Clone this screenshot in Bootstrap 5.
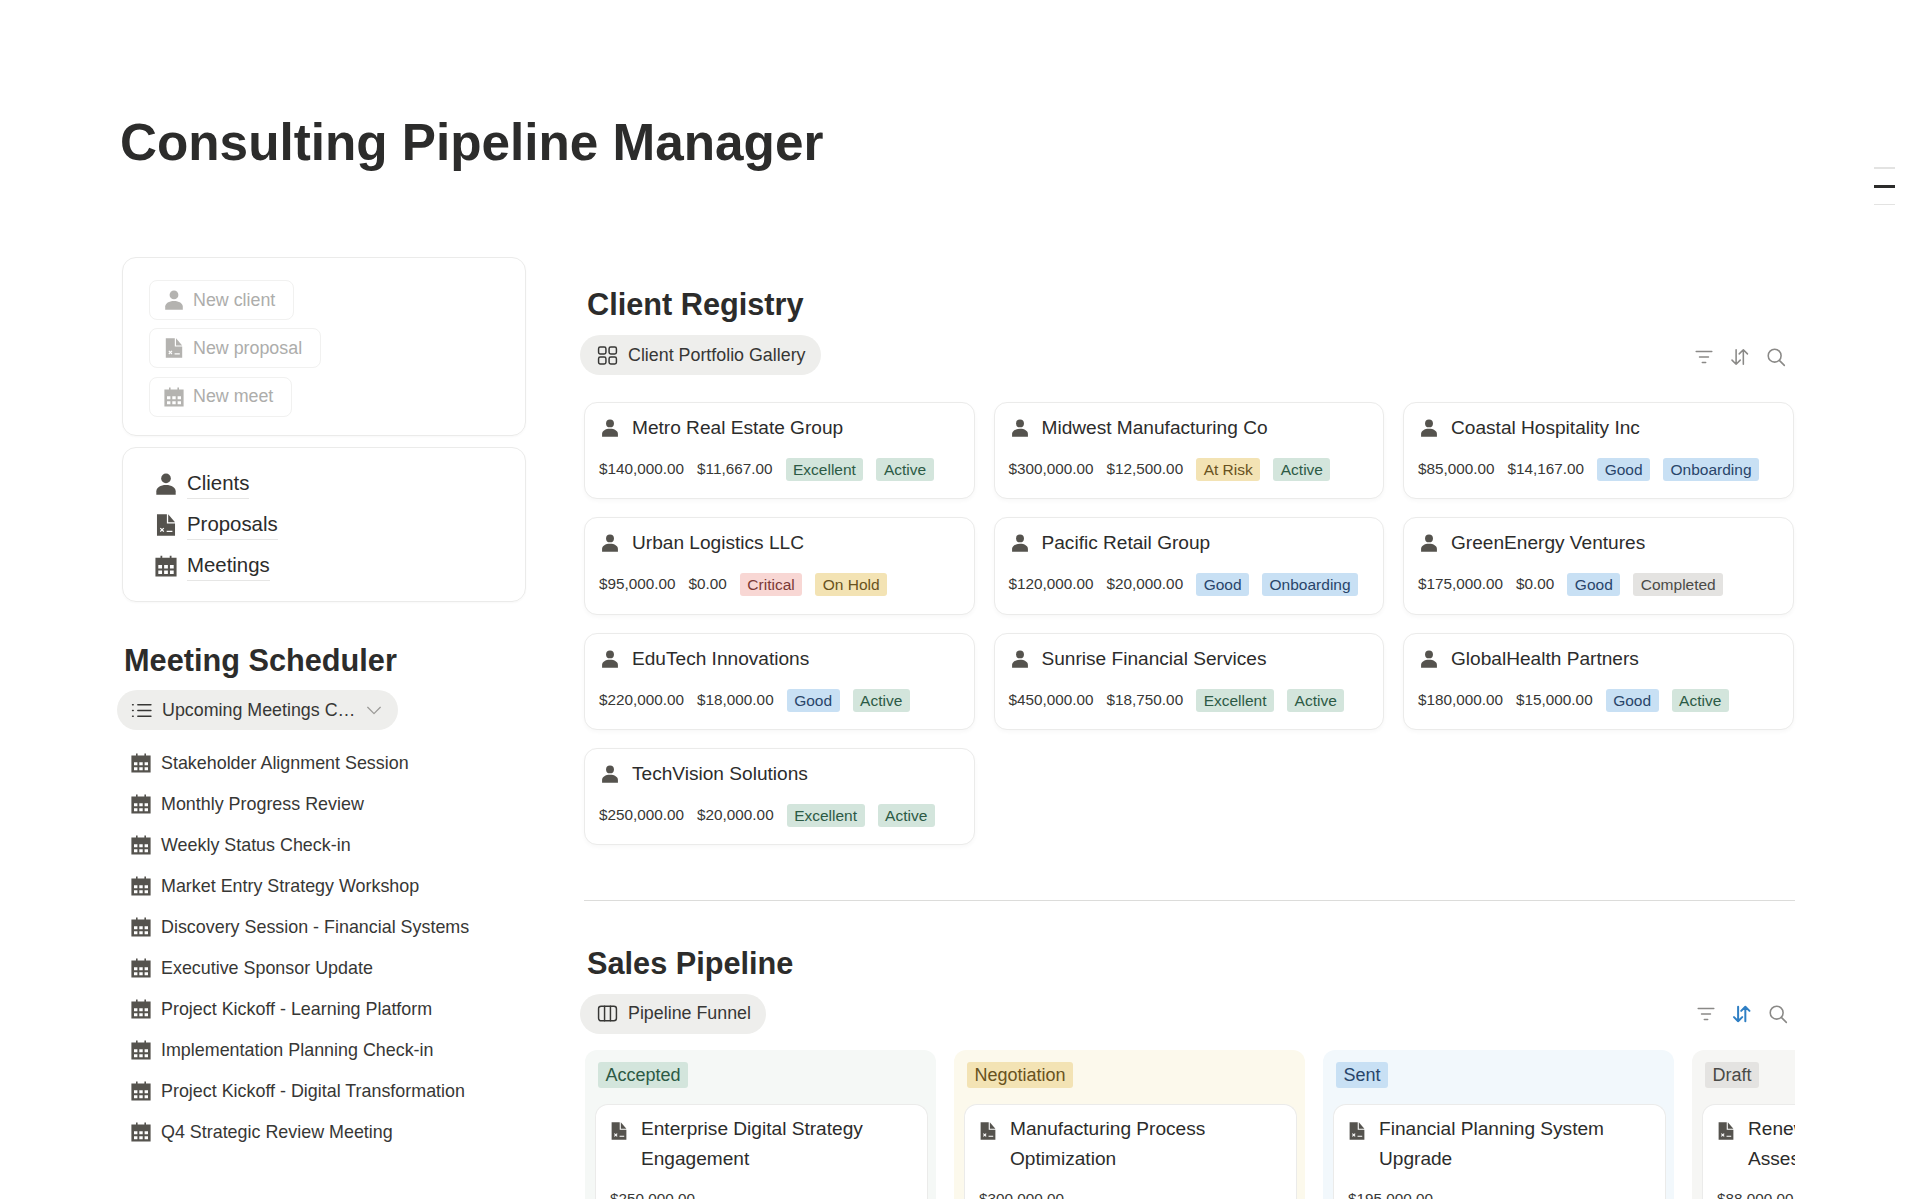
<!DOCTYPE html>
<html lang="en">
<head>
  <meta charset="UTF-8" />
  <meta name="viewport" content="width=device-width, initial-scale=1" />
  <title>Consulting Pipeline Manager</title>
  <link rel="stylesheet" href="https://cdn.jsdelivr.net/npm/bootstrap@5.3.0/dist/css/bootstrap.min.css" />
  <style>
    html, body { height: 1199px; overflow: hidden; }
    body { font-family: "Liberation Sans", Arial, sans-serif; color: #2c2c2b; background: #fff; }
    .page-wrap { padding: 113px 0 0 120px; width: 1796px; }
    .page-title { font-size: 51.25px; font-weight: 700; line-height: 60px; margin: 0 0 84px; color: #2c2c2b; }
    .side-col { width: 404px; margin-left: 2px; flex: none; }
    .main-col { width: 1211px; margin-left: 58px; padding-top: 28px; flex: none; }
    .ic-sm { width: 18px; height: 18px; flex: none; fill: #55534e; }
    .ic-md { width: 21px; height: 21px; flex: none; fill: #55534e; }
    .ic-line { fill: none; stroke: currentColor; stroke-width: 1.4; stroke-linecap: round; stroke-linejoin: round; }
    .outline-box { border: 1.5px solid #ebebea; border-radius: 14px; box-shadow: 0 1px 2px rgba(0,0,0,.03); }
    .box-new { height: 179px; padding: 22px 26px; margin-bottom: 11px; }
    .new-btn { height: 40px; padding: 0 18px 0 14px; border: 1px solid #f1f1f0; border-radius: 8px; color: #adadab; font-size: 17.85px; gap: 9px; margin-bottom: 8.4px; width: fit-content; }
    .new-btn .ic-md { fill: #b4b3b0; width: 20px; height: 20px; }
    .box-links { height: 155px; padding: 15px 32px; }
    .link-row { height: 41px; gap: 10px; font-size: 20.4px; }
    .link-row span { border-bottom: 1px solid #e6e6e5; line-height: 30px; }
    .link-row .ic-md { width: 22px; height: 22px; }
    .block-title { font-size: 30.7px; font-weight: 700; line-height: 40px; margin: 0; }
    .view-pill { height: 40px; background: #eeeeec; border-radius: 20px; padding: 0 15px 0 17px; gap: 10px; font-size: 17.85px; color: #373735; width: fit-content; }
    .view-pill svg { width: 21px; height: 21px; flex: none; }
    .view-pill span { white-space: nowrap; }
    .side-head { margin: 39px 0 0 2px; }
    .side-pill { width: 281px; margin: 9px 0 0 -5px; padding-left: 14px; padding-right: 18px; }
    .side-pill .caret-ic { width: 18px; height: 18px; color: #9b9a97; margin-left: auto; }
    .meet-list { margin: 12.5px 0 0; padding: 0; list-style: none; }
    .meet-row { height: 41px; padding-left: 9px; gap: 10px; font-size: 17.9px; color: #373735; }
    .meet-row .ic-md { width: 20px; height: 20px; }
    .main-head { margin-left: 3px; }
    .main-bar { margin-top: 10px; }
    .main-bar .view-pill { margin-left: -4px; }
    .tools { gap: 16px; color: #8a8987; padding-right: 9px; margin-top: 4px; }
    .tools svg { width: 20px; height: 20px; }
    .tools .is-on { color: #2f7fc4; stroke-width: 1.8; }
    .tools-sales { margin-top: 0; padding-right: 7px; }
    .client-grid { --bs-gutter-x: 19px; --bs-gutter-y: 18px; margin-top: 9px; margin-right: -8px; }
    .client-card { min-height: 97.3px; border: 1.5px solid #ebebea; border-radius: 13px; box-shadow: 0 2px 4px rgba(0,0,0,.03); padding: 11px 14px; background: #fff; }
    .card-name { font-size: 19.1px; line-height: 28px; gap: 13px; padding-left: 2px; }
    .card-vals { margin-top: 16px; gap: 13px; font-size: 15.3px; color: #373735; height: 23px; }
    .chip { height: 23px; line-height: 23px; padding: 0 7.5px; border-radius: 3px; font-size: 15.5px; }
    .chip-green { background: #d3e5dc; color: #2c5a45; }
    .chip-blue { background: #c8e0f4; color: #28456a; }
    .chip-red { background: #f8d7d4; color: #7c3a36; }
    .chip-yellow { background: #f3e3b4; color: #685220; }
    .chip-grey { background: #e4e3e1; color: #4a4a47; }
    .split-line { margin: 54.5px 0 0; border: 0; border-top: 1px solid #dcdcda; opacity: 1; }
    .sales-head { margin-top: 43px; }
    .board { gap: 18px; margin: 16px 0 0 1px; overflow: hidden; height: 170px; }
    .board-col { width: 351px; flex: none; border-radius: 12px 12px 0 0; padding: 12px 10px 0; }
    .col-green { background: #f5f8f6; }
    .col-yellow { background: #fcf9ec; }
    .col-blue { background: #f2f8fc; }
    .col-grey { background: #f6f6f4; }
    .col-tag { display: inline-block; height: 26px; line-height: 26px; padding: 0 7.5px; border-radius: 3px; font-size: 18px; margin-left: 3px; }
    .deal-card { margin-top: 16.5px; background: #fff; border: 1.5px solid #ebebea; border-radius: 13px 13px 0 0; border-bottom: 0; padding: 9px 14px 0; width: 333px; }
    .deal-name { font-size: 19.1px; line-height: 30px; gap: 13px; }
    .deal-name .ic-md { width: 18px; height: 18px; margin-top: 8px; }
    .deal-name span { width: 270px; }
    .deal-val { font-size: 15.3px; margin-top: 14px; color: #373735; }
    .toc-marks { position: fixed; right: 25px; top: 167px; width: 21px; }
    .toc-marks i { display: block; height: 1.5px; background: #e3e3e2; margin-bottom: 16px; }
    .toc-marks i.on { background: #2c2c2b; height: 3px; }
  </style>
</head>
<body>
  <svg width="0" height="0" class="position-absolute">
    <symbol id="i-person" viewBox="0 0 20 20">
      <circle cx="10" cy="4.9" r="4.4"/>
      <path d="M1.2 19.8v-3.2C1.2 13.2 5 10.9 10 10.9s8.8 2.3 8.8 5.7v3.2z"/>
    </symbol>
    <symbol id="i-file" viewBox="0 0 20 20">
      <path fill-rule="evenodd" d="M1.8.2h9v8.4h7.4v11.2H1.8zM4.4 13.2l1.2 1.2-1.2 1.2.8.8 1.2-1.2 1.2 1.2.8-.8-1.2-1.2 1.2-1.2-.8-.8-1.2 1.2-1.2-1.2zM10.6 15.2v1.2h5.2v-1.2z"/>
      <path d="M12 .2l6.2 7.2H12z"/>
    </symbol>
    <symbol id="i-cal" viewBox="0 0 20 20">
      <path fill-rule="evenodd" d="M5 .6h1.6v2H13.4v-2H15v2h4.6v17H.4v-17H5zM3 9.2v3h3.4v-3zM8.3 9.2v3h3.4v-3zM13.6 9.2v3H17v-3zM3 14.2v3h3.4v-3zM8.3 14.2v3h3.4v-3zM13.6 14.2v3H17v-3z"/>
    </symbol>
  </svg>

  <div class="page-wrap">
    <h1 class="page-title">Consulting Pipeline Manager</h1>
    <div class="d-flex">
      <div class="side-col">
        <div class="outline-box box-new">
          <div class="new-btn d-flex align-items-center"><svg class="ic-md"><use href="#i-person"/></svg>New client</div>
          <div class="new-btn d-flex align-items-center"><svg class="ic-md"><use href="#i-file"/></svg>New proposal</div>
          <div class="new-btn d-flex align-items-center"><svg class="ic-md"><use href="#i-cal"/></svg>New meet</div>
        </div>
        <div class="outline-box box-links">
          <div class="link-row d-flex align-items-center"><svg class="ic-md"><use href="#i-person"/></svg><span>Clients</span></div>
          <div class="link-row d-flex align-items-center"><svg class="ic-md"><use href="#i-file"/></svg><span>Proposals</span></div>
          <div class="link-row d-flex align-items-center"><svg class="ic-md"><use href="#i-cal"/></svg><span>Meetings</span></div>
        </div>

        <h2 class="block-title side-head">Meeting Scheduler</h2>
        <div class="view-pill side-pill d-flex align-items-center">
          <svg class="ic-line" viewBox="0 0 20 20"><path d="M6.5 4.5H19M6.5 10H19M6.5 15.5H19M1.5 4.5h.6M1.5 10h.6M1.5 15.5h.6"/></svg>
          <span>Upcoming Meetings C…</span>
          <svg class="ic-line caret-ic" viewBox="0 0 20 20"><path d="M3 7l7 7 7-7"/></svg>
        </div>
        <ul class="meet-list">
          <li class="meet-row d-flex align-items-center"><svg class="ic-md"><use href="#i-cal"/></svg>Stakeholder Alignment Session</li>
          <li class="meet-row d-flex align-items-center"><svg class="ic-md"><use href="#i-cal"/></svg>Monthly Progress Review</li>
          <li class="meet-row d-flex align-items-center"><svg class="ic-md"><use href="#i-cal"/></svg>Weekly Status Check-in</li>
          <li class="meet-row d-flex align-items-center"><svg class="ic-md"><use href="#i-cal"/></svg>Market Entry Strategy Workshop</li>
          <li class="meet-row d-flex align-items-center"><svg class="ic-md"><use href="#i-cal"/></svg>Discovery Session - Financial Systems</li>
          <li class="meet-row d-flex align-items-center"><svg class="ic-md"><use href="#i-cal"/></svg>Executive Sponsor Update</li>
          <li class="meet-row d-flex align-items-center"><svg class="ic-md"><use href="#i-cal"/></svg>Project Kickoff - Learning Platform</li>
          <li class="meet-row d-flex align-items-center"><svg class="ic-md"><use href="#i-cal"/></svg>Implementation Planning Check-in</li>
          <li class="meet-row d-flex align-items-center"><svg class="ic-md"><use href="#i-cal"/></svg>Project Kickoff - Digital Transformation</li>
          <li class="meet-row d-flex align-items-center"><svg class="ic-md"><use href="#i-cal"/></svg>Q4 Strategic Review Meeting</li>
        </ul>
      </div>

      <div class="main-col">
        <h2 class="block-title main-head">Client Registry</h2>
        <div class="main-bar d-flex align-items-center justify-content-between">
          <div class="view-pill d-flex align-items-center">
            <svg class="ic-line" viewBox="0 0 20 20"><rect x="1.5" y="2" width="7" height="6.5" rx="1.6"/><rect x="11.5" y="2" width="7" height="6.5" rx="1.6"/><rect x="1.5" y="11.5" width="7" height="6.5" rx="1.6"/><rect x="11.5" y="11.5" width="7" height="6.5" rx="1.6"/></svg>
            <span>Client Portfolio Gallery</span>
          </div>
          <div class="tools d-flex align-items-center">
            <svg class="ic-line" viewBox="0 0 18 18"><path d="M2 4h14M5 9h8M7.5 14h3"/></svg>
            <svg class="ic-line" viewBox="0 0 18 18"><path d="M5.5 2.5v13M1.8 11.8l3.7 3.7 3.7-3.7M12 15.5v-13M8.3 6.2L12 2.5l3.7 3.7"/></svg>
            <svg class="ic-line" viewBox="0 0 18 18"><circle cx="7.8" cy="7.8" r="5.8"/><path d="M12 12l4.5 4.5"/></svg>
          </div>
        </div>

        <div class="row row-cols-3 client-grid">
          <div class="col"><div class="client-card"><div class="card-name d-flex align-items-center"><svg class="ic-sm"><use href="#i-person"/></svg>Metro Real Estate Group</div><div class="card-vals d-flex align-items-center"><span>$140,000.00</span><span>$11,667.00</span><span class="chip chip-green">Excellent</span><span class="chip chip-green">Active</span></div></div></div>
          <div class="col"><div class="client-card"><div class="card-name d-flex align-items-center"><svg class="ic-sm"><use href="#i-person"/></svg>Midwest Manufacturing Co</div><div class="card-vals d-flex align-items-center"><span>$300,000.00</span><span>$12,500.00</span><span class="chip chip-yellow">At Risk</span><span class="chip chip-green">Active</span></div></div></div>
          <div class="col"><div class="client-card"><div class="card-name d-flex align-items-center"><svg class="ic-sm"><use href="#i-person"/></svg>Coastal Hospitality Inc</div><div class="card-vals d-flex align-items-center"><span>$85,000.00</span><span>$14,167.00</span><span class="chip chip-blue">Good</span><span class="chip chip-blue">Onboarding</span></div></div></div>
          <div class="col"><div class="client-card"><div class="card-name d-flex align-items-center"><svg class="ic-sm"><use href="#i-person"/></svg>Urban Logistics LLC</div><div class="card-vals d-flex align-items-center"><span>$95,000.00</span><span>$0.00</span><span class="chip chip-red">Critical</span><span class="chip chip-yellow">On Hold</span></div></div></div>
          <div class="col"><div class="client-card"><div class="card-name d-flex align-items-center"><svg class="ic-sm"><use href="#i-person"/></svg>Pacific Retail Group</div><div class="card-vals d-flex align-items-center"><span>$120,000.00</span><span>$20,000.00</span><span class="chip chip-blue">Good</span><span class="chip chip-blue">Onboarding</span></div></div></div>
          <div class="col"><div class="client-card"><div class="card-name d-flex align-items-center"><svg class="ic-sm"><use href="#i-person"/></svg>GreenEnergy Ventures</div><div class="card-vals d-flex align-items-center"><span>$175,000.00</span><span>$0.00</span><span class="chip chip-blue">Good</span><span class="chip chip-grey">Completed</span></div></div></div>
          <div class="col"><div class="client-card"><div class="card-name d-flex align-items-center"><svg class="ic-sm"><use href="#i-person"/></svg>EduTech Innovations</div><div class="card-vals d-flex align-items-center"><span>$220,000.00</span><span>$18,000.00</span><span class="chip chip-blue">Good</span><span class="chip chip-green">Active</span></div></div></div>
          <div class="col"><div class="client-card"><div class="card-name d-flex align-items-center"><svg class="ic-sm"><use href="#i-person"/></svg>Sunrise Financial Services</div><div class="card-vals d-flex align-items-center"><span>$450,000.00</span><span>$18,750.00</span><span class="chip chip-green">Excellent</span><span class="chip chip-green">Active</span></div></div></div>
          <div class="col"><div class="client-card"><div class="card-name d-flex align-items-center"><svg class="ic-sm"><use href="#i-person"/></svg>GlobalHealth Partners</div><div class="card-vals d-flex align-items-center"><span>$180,000.00</span><span>$15,000.00</span><span class="chip chip-blue">Good</span><span class="chip chip-green">Active</span></div></div></div>
          <div class="col"><div class="client-card"><div class="card-name d-flex align-items-center"><svg class="ic-sm"><use href="#i-person"/></svg>TechVision Solutions</div><div class="card-vals d-flex align-items-center"><span>$250,000.00</span><span>$20,000.00</span><span class="chip chip-green">Excellent</span><span class="chip chip-green">Active</span></div></div></div>
        </div>

        <hr class="split-line" />

        <h2 class="block-title main-head sales-head">Sales Pipeline</h2>
        <div class="main-bar d-flex align-items-center justify-content-between">
          <div class="view-pill d-flex align-items-center">
            <svg class="ic-line" viewBox="0 0 20 20"><rect x="1.5" y="3" width="17" height="14" rx="2.4"/><path d="M7.2 3v14M12.8 3v14"/></svg>
            <span>Pipeline Funnel</span>
          </div>
          <div class="tools tools-sales d-flex align-items-center">
            <svg class="ic-line" viewBox="0 0 18 18"><path d="M2 4h14M5 9h8M7.5 14h3"/></svg>
            <svg class="ic-line is-on" viewBox="0 0 18 18"><path d="M5.5 2.5v13M1.8 11.8l3.7 3.7 3.7-3.7M12 15.5v-13M8.3 6.2L12 2.5l3.7 3.7"/></svg>
            <svg class="ic-line" viewBox="0 0 18 18"><circle cx="7.8" cy="7.8" r="5.8"/><path d="M12 12l4.5 4.5"/></svg>
          </div>
        </div>

        <div class="board d-flex">
          <div class="board-col col-green">
            <span class="col-tag chip-green">Accepted</span>
            <div class="deal-card"><div class="deal-name d-flex"><svg class="ic-md"><use href="#i-file"/></svg><span>Enterprise Digital Strategy Engagement</span></div><div class="deal-val">$250,000.00</div></div>
          </div>
          <div class="board-col col-yellow">
            <span class="col-tag chip-yellow">Negotiation</span>
            <div class="deal-card"><div class="deal-name d-flex"><svg class="ic-md"><use href="#i-file"/></svg><span>Manufacturing Process Optimization</span></div><div class="deal-val">$300,000.00</div></div>
          </div>
          <div class="board-col col-blue">
            <span class="col-tag chip-blue">Sent</span>
            <div class="deal-card"><div class="deal-name d-flex"><svg class="ic-md"><use href="#i-file"/></svg><span>Financial Planning System Upgrade</span></div><div class="deal-val">$195,000.00</div></div>
          </div>
          <div class="board-col col-grey">
            <span class="col-tag chip-grey">Draft</span>
            <div class="deal-card"><div class="deal-name d-flex"><svg class="ic-md"><use href="#i-file"/></svg><span>Renewal Operations Maturity Assessment</span></div><div class="deal-val">$88,000.00</div></div>
          </div>
        </div>
      </div>
    </div>
  </div>

  <div class="toc-marks"><i></i><i class="on"></i><i></i></div>

  <script src="https://cdn.jsdelivr.net/npm/bootstrap@5.3.0/dist/js/bootstrap.bundle.min.js"></script>
</body>
</html>
